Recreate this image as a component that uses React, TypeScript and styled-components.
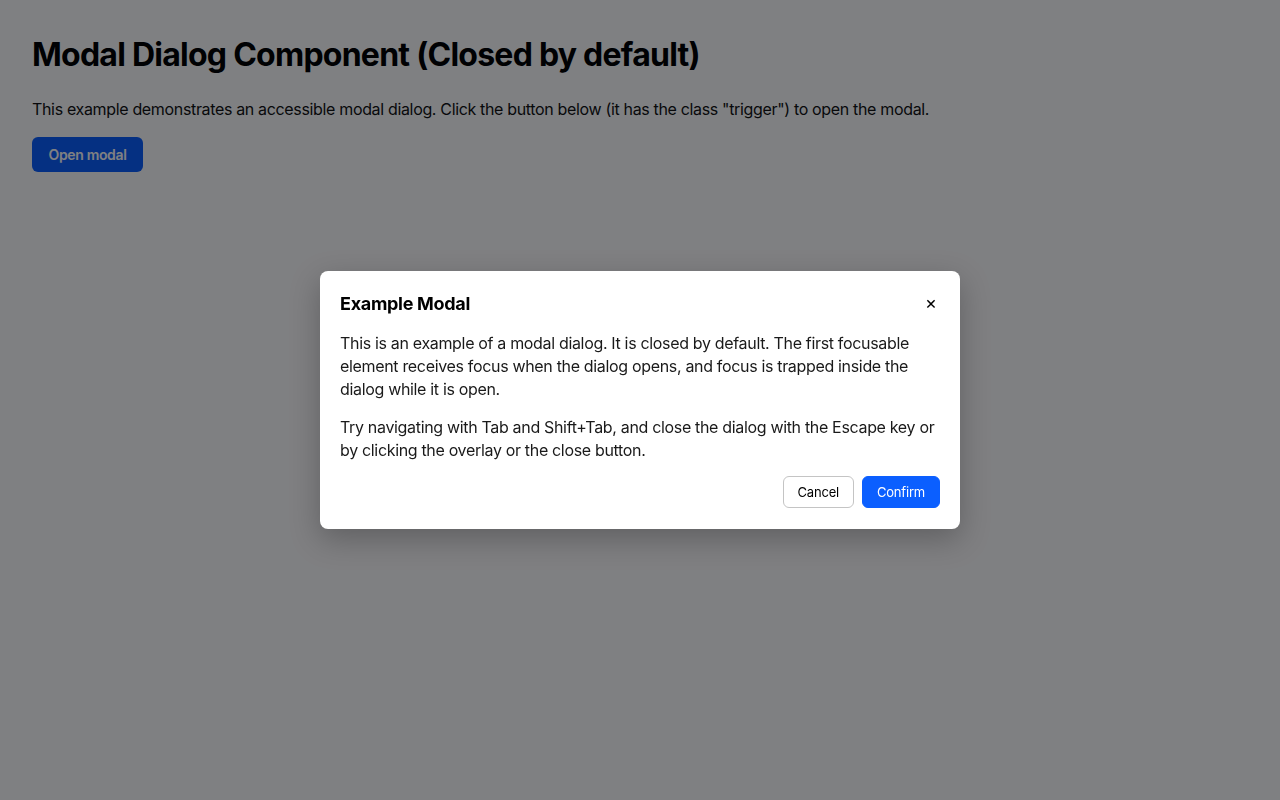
import { createGlobalStyle, styled } from "styled-components";

const GlobalStyle = createGlobalStyle`
  * { box-sizing: border-box; }
  html, body { margin: 0; padding: 0; }
  body {
    font-family: Inter, "Noto Sans", "Liberation Sans", sans-serif;
    background: #ffffff;
    color: #111;
    height: 800px;
  }
`;

const Page = styled.main`
  padding: 17px 32px;
`;

const Title = styled.h1`
  font-size: 32px;
  font-weight: 700;
  line-height: 38px;
  margin: 19px 0 23px;
  color: #000;
  letter-spacing: -0.75px;
`;

const Lead = styled.p`
  font-size: 16px;
  line-height: 24px;
  margin: 0 0 16px;
  letter-spacing: -0.34px;
`;

const Trigger = styled.button`
  font-family: inherit;
  font-size: 14px;
  font-weight: 600;
  letter-spacing: -0.35px;
  color: #fff;
  background: #0b5fff;
  border: none;
  border-radius: 6px;
  height: 35px;
  width: 111px;
  padding: 0;
`;

const Overlay = styled.div`
  position: fixed;
  inset: 0;
  background: rgba(0, 1, 6, 0.5);
  display: flex;
  align-items: center;
  justify-content: center;
`;

const Dialog = styled.div`
  width: 640px;
  background: #fff;
  border-radius: 8px;
  padding: 20px;
  box-shadow: 0 10px 30px rgba(0, 0, 0, 0.25);
  display: flex;
  flex-direction: column;
`;

const DialogHeader = styled.div`
  display: flex;
  justify-content: space-between;
  align-items: center;
  height: 24px;
  margin-bottom: 17px;
`;

const DialogTitle = styled.h2`
  margin: 0;
  font-size: 18px;
  font-weight: 700;
  letter-spacing: -0.3px;
  color: #000;
`;

const CloseButton = styled.button`
  font-family: inherit;
  background: none;
  border: none;
  padding: 0;
  width: 18px;
  font-size: 18px;
  line-height: 1;
  color: #000;
`;

const BodyText = styled.p`
  font-size: 16px;
  line-height: 23px;
  margin: 0 0 15px;
  letter-spacing: -0.33px;
  color: #1a1a1a;

  &:last-of-type {
    margin-bottom: 14px;
  }
`;

const Footer = styled.div`
  display: flex;
  justify-content: flex-end;
  gap: 8px;
  padding-bottom: 1px;
`;

const ActionButton = styled.button<{ $primary?: boolean }>`
  font-family: inherit;
  font-size: 13px;
  letter-spacing: -0.2px;
  height: 32px;
  padding: 0 14px;
  border-radius: 6px;
  border: 1px solid ${(p) => (p.$primary ? "#0b5fff" : "#c4c4c4")};
  background: ${(p) => (p.$primary ? "#0b5fff" : "#fff")};
  color: ${(p) => (p.$primary ? "#fff" : "#000")};
`;

export default function App() {
  return (
    <>
      <GlobalStyle />
      <Page>
        <Title>Modal Dialog Component (Closed by default)</Title>
        <Lead>
          This example demonstrates an accessible modal dialog. Click the button below (it has the
          class "trigger") to open the modal.
        </Lead>
        <Trigger className="trigger">Open modal</Trigger>
      </Page>
      <Overlay>
        <Dialog role="dialog" aria-modal="true">
          <DialogHeader>
            <DialogTitle>Example Modal</DialogTitle>
            <CloseButton aria-label="Close">×</CloseButton>
          </DialogHeader>
          <BodyText>
            This is an example of a modal dialog. It is closed by default. The first focusable
            element receives focus when the dialog opens, and focus is trapped inside the dialog
            while it is open.
          </BodyText>
          <BodyText>
            Try navigating with Tab and Shift+Tab, and close the dialog with the Escape key or by
            clicking the overlay or the close button.
          </BodyText>
          <Footer>
            <ActionButton>Cancel</ActionButton>
            <ActionButton $primary>Confirm</ActionButton>
          </Footer>
        </Dialog>
      </Overlay>
    </>
  );
}
